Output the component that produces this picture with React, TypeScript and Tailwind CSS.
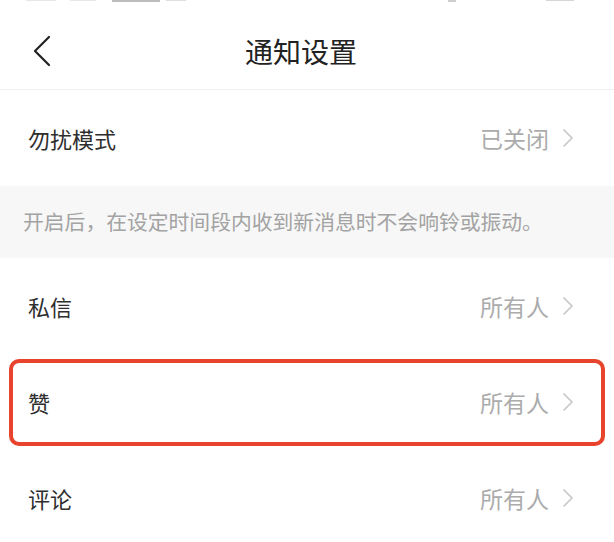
const font = { fontFamily: '"Noto Sans CJK SC", "Noto Sans", sans-serif' };

function Chevron() {
    return (
        <svg width="12" height="20" viewBox="0 0 12 20" fill="none" className="text-[#c6c6c6]">
            <polyline points="2,2 10,10 2,18" stroke="currentColor" strokeWidth="1.7" strokeLinecap="round" strokeLinejoin="round" />
        </svg>
    );
}

function Row({ label, value, highlight }: { label: string; value: string; highlight?: boolean }) {
    return (
        <div className="h-[96px] px-[9px] flex items-center">
            <div
                className={
                    "flex-1 h-[87px] flex items-center justify-between pl-[15px] pr-[27px] rounded-[10px] border-[4px] " +
                    (highlight ? "border-[#e8432d]" : "border-transparent")
                }
            >
                <span className="text-[22px] text-[#2e2e2e]">{label}</span>
                <span className="flex items-center gap-[13px] text-[23px] text-[#ababab]">
                    {value}
                    <Chevron />
                </span>
            </div>
        </div>
    );
}

export default function App() {
    return (
        <div className="w-[614px] h-[542px] bg-white overflow-hidden" style={font}>
            {/* status bar, mostly cut off */}
            <div className="h-[4px] flex items-start justify-between px-[26px]">
                <div className="flex items-start gap-[6px]">
                    <div className="w-[30px] h-[1px] bg-[#e6e6e6]" />
                    <div className="w-[26px] h-[1px] bg-[#e6e6e6] ml-[8px]" />
                    <div className="w-[48px] h-[2px] bg-[#bdbdbd] ml-[10px]" />
                    <div className="w-[20px] h-[1px] bg-[#e0e0e0]" />
                </div>
                <div className="flex items-start gap-[90px] mr-[14px]">
                    <div className="w-[8px] h-[2px] bg-[#cfcfcf]" />
                    <div className="w-[28px] h-[1px] bg-[#d6d6d6]" />
                </div>
            </div>
            <div className="h-[86px] flex items-center relative border-b border-[#f0f0f0]">
                <svg width="20" height="32" viewBox="0 0 20 32" fill="none" className="ml-[32px] mt-[8px] text-[#222]">
                    <polyline points="17,2 3,16 17,30" stroke="currentColor" strokeWidth="2.2" strokeLinecap="round" strokeLinejoin="round" />
                </svg>
                <span className="absolute left-0 right-[12px] text-center text-[28px] text-[#222] mt-[8px] pointer-events-none">
                    通知设置
                </span>
            </div>
            <Row label="勿扰模式" value="已关闭" />
            <div className="h-[72px] bg-[#f7f7f7] px-[23px] flex items-center text-[20.8px] text-[#a3a3a3]">
                开启后，在设定时间段内收到新消息时不会响铃或振动。
            </div>
            <Row label="私信" value="所有人" />
            <Row label="赞" value="所有人" highlight />
            <Row label="评论" value="所有人" />
        </div>
    );
}
